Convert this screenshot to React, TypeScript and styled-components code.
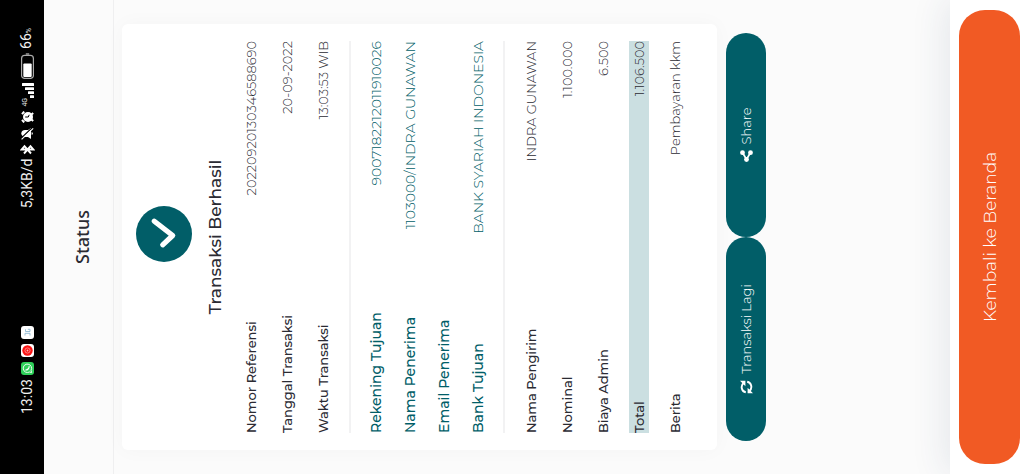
import React from "react";
import styled, { createGlobalStyle } from "styled-components";

const TEAL = "#015e68";
const INK = "#2b2b33";
const ORANGE = "#f15a24";

const GlobalStyle = createGlobalStyle`
  *, *::before, *::after { box-sizing: border-box; }
  body { margin: 0; background: #fbfbfb; font-family: Montserrat, Inter, sans-serif; }
  h1, h2, dl, dd { margin: 0; }
`;

const Viewport = styled.div`
  height: 100vh;
  overflow: hidden;
`;

/* The phone page is shown lying on its left side. */
const Phone = styled.div`
  display: flex;
  flex-direction: column;
  width: 100vh;
  height: 100vw;
  background: #fbfbfb;
  transform-origin: top left;
  transform: rotate(-90deg) translateX(-100%);
`;

const StatusBar = styled.div`
  display: flex;
  align-items: center;
  justify-content: space-between;
  height: 44px;
  padding: 10px 28px 0 60px;
  background: #000;
  color: #f0f0f0;
  font: 400 14px/20px Roboto, sans-serif;
`;

const StatusGroup = styled.div`
  display: flex;
  align-items: center;
  gap: 4px;
  svg { display: block; }
`;

const RunningApps = styled.div`
  display: flex;
  gap: 5px;
`;

const Percent = styled.small`
  font-size: 7px;
`;

const Header = styled.header`
  display: flex;
  align-items: center;
  justify-content: center;
  height: 70px;
  padding-top: 6px;
  border-bottom: 1px solid #efeff0;
`;

const HeaderTitle = styled.h1`
  color: ${INK};
  font: 500 18px/24px "Noto Sans", sans-serif;
`;

const Main = styled.main`
  flex: 1;
  padding: 8px 24px 0;
`;

const Card = styled.section`
  padding: 14px 17px 32px;
  border-radius: 6px;
  background: #fff;
  box-shadow: 0 0 20px rgba(0, 0, 0, 0.03);
`;

const CardHead = styled.div`
  display: flex;
  flex-direction: column;
  align-items: center;
  gap: 11px;
  padding-bottom: 14px;
`;

const CardTitle = styled.h2`
  color: ${INK};
  font-size: 17px;
  font-weight: 500;
  line-height: 24px;
`;

const Details = styled.dl<{ $accent?: boolean }>`
  display: flex;
  flex-direction: column;
  gap: ${(p) => (p.$accent ? 14 : 16)}px;
  padding: ${(p) => (p.$accent ? 15 : 16)}px 0;
  color: ${(p) => (p.$accent ? TEAL : INK)};
  font-size: ${(p) => (p.$accent ? 14 : 13)}px;
  line-height: 20px;
  &:first-of-type { padding-top: 0; }
  & + & { border-top: 2px solid #f2f2f3; }
  &:last-child { padding-bottom: 0; }
`;

const Row = styled.div<{ $highlight?: boolean }>`
  display: flex;
  justify-content: space-between;
  height: 20px;
  background: ${(p) => (p.$highlight ? "#cbdfe1" : "transparent")};
`;

const Label = styled.dt`
  font-weight: 500;
`;

const Value = styled.dd`
  font-weight: 300;
`;

const Actions = styled.div`
  display: flex;
  padding: 9px 9px 0;
`;

const ActionButton = styled.button`
  display: flex;
  flex: 1;
  align-items: center;
  justify-content: center;
  gap: 6px;
  height: 40px;
  padding: 0;
  border: 0;
  border-radius: 20px;
  background: ${TEAL};
  color: #fff;
  font: 300 13px/20px Montserrat, Inter, sans-serif;
`;

const Footer = styled.footer`
  padding: 9px 10px 8px;
  background: #fff;
  box-shadow: 0 -4px 36px rgba(40, 60, 100, 0.11);
`;

const HomeButton = styled.button`
  display: block;
  width: 100%;
  height: 61px;
  padding: 0;
  border: 0;
  border-radius: 26px;
  background: ${ORANGE};
  color: #fff;
  font: 300 17px/24px Montserrat, Inter, sans-serif;
`;

type Item = { label: string; value: string; highlight?: boolean };

const reference: Item[] = [
  { label: "Nomor Referensi", value: "20220920130346588690" },
  { label: "Tanggal Transaksi", value: "20-09-2022" },
  { label: "Waktu Transaksi", value: "13:03:53 WIB" },
];

const recipient: Item[] = [
  { label: "Rekening Tujuan", value: "9007182212011910026" },
  { label: "Nama Penerima", value: "1103000/INDRA GUNAWAN" },
  { label: "Email Penerima", value: "" },
  { label: "Bank Tujuan", value: "BANK SYARIAH INDONESIA" },
];

const payment: Item[] = [
  { label: "Nama Pengirim", value: "INDRA GUNAWAN" },
  { label: "Nominal", value: "1.100.000" },
  { label: "Biaya Admin", value: "6.500" },
  { label: "Total", value: "1.106.500", highlight: true },
  { label: "Berita", value: "Pembayaran kkm" },
];

function DetailList({ items, accent }: { items: Item[]; accent?: boolean }) {
  return (
    <Details $accent={accent}>
      {items.map((item) => (
        <Row key={item.label} $highlight={item.highlight}>
          <Label>{item.label}</Label>
          <Value>{item.value}</Value>
        </Row>
      ))}
    </Details>
  );
}

const WhatsAppIcon = () => (
  <svg width="13" height="13" viewBox="0 0 13 13" fill="none">
    <rect width="13" height="13" rx="3" fill="#2fd05a" />
    <path d="M2.4 10.6 3 8.4A4.2 4.2 0 1 1 4.7 10.1Z" stroke="#fff" strokeWidth="0.9" />
    <path d="M5 4.8C4.9 6.5 6.6 8.2 8.4 8.1" stroke="#fff" strokeWidth="1.2" strokeLinecap="round" />
  </svg>
);

const RecorderIcon = () => (
  <svg width="13" height="13" viewBox="0 0 13 13" fill="none">
    <rect width="13" height="13" rx="3" fill="#fff" />
    <circle cx="6.5" cy="6.5" r="5.2" fill="#fa1414" />
    <circle cx="6.5" cy="6.5" r="2.6" stroke="#ff9a9a" strokeWidth="0.8" />
    <circle cx="6.5" cy="6.5" r="0.9" fill="#ffb0b0" />
  </svg>
);

const AppIcon = () => (
  <svg width="13" height="13" viewBox="0 0 13 13" fill="none">
    <rect width="13" height="13" rx="3" fill="#fff" />
    <path d="M3.500 4h2.200v5H3.500M9.700 4.500H7.500v4.500h2.200V6.800" stroke="#8fb9d2" strokeWidth="0.9" />
  </svg>
);

const BluetoothIcon = () => (
  <svg width="11" height="15" viewBox="0 0 11 15" fill="none" stroke="#fff" strokeWidth="1.9">
    <path d="M1.5 4 8.8 10.5 5.5 13.3V1.7L8.8 4.5 1.5 11" />
  </svg>
);

const MutedIcon = () => (
  <svg width="13" height="14" viewBox="0 0 12 14">
    <path d="M6 1.2C3.6 1.6 2.6 3.2 2.6 5v3L.6 11h10.800l-2-3V5C9.400 3.200 8.400 1.600 6 1.200ZM4.700 11.600a1.300 1.300 0 0 0 2.600 0Z" fill="#fff" />
    <path d="M.8 .6 11.800 12.200" stroke="#000" strokeWidth="1.2" />
    <path d="M.2 1.600 11.200 13.200" stroke="#fff" strokeWidth="1.1" />
  </svg>
);

const AlarmIcon = () => (
  <svg width="12" height="13" viewBox="0 0 12 13" fill="none">
    <circle cx="6" cy="7" r="5" fill="#fff" />
    <path d="M.6 3.2 3.2 1M11.4 3.2 8.8 1M2 12.2l1.4-1.7M10 12.2l-1.4-1.7" stroke="#fff" strokeWidth="2" />
    <path d="M6 4.2V7.3L8.2 8.2" stroke="#000" strokeWidth="1" />
  </svg>
);

const SignalBox = styled.div`
  display: flex;
  align-items: flex-start;
`;

const NetworkLabel = styled.span`
  font-size: 7px;
  line-height: 8px;
`;

const SignalIcon = () => (
  <svg width="15" height="13" viewBox="0 0 15 13" fill="#fff">
    <rect x="0" y="9" width="2.8" height="4" rx=".5" />
    <rect x="4" y="7" width="2.8" height="6" rx=".5" />
    <rect x="8" y="4" width="2.8" height="9" rx=".5" />
    <rect x="12" y="1" width="3" height="12" rx=".5" />
  </svg>
);

const BatteryIcon = () => (
  <svg width="26" height="13" viewBox="0 0 26 13" fill="none">
    <rect x=".6" y=".6" width="23" height="11.8" rx="3" stroke="#aaa" strokeWidth="1.2" />
    <rect x="2" y="2.3" width="13.5" height="8.4" rx="1" fill="#fff" />
    <path d="M25 4.8v3.400" stroke="#999" strokeWidth="1.4" />
  </svg>
);

const SuccessIcon = () => (
  <svg width="62" height="56" viewBox="0 0 62 56" fill="none">
    <circle cx="34" cy="28" r="28" fill={TEAL} />
    <path d="M23.2 26.7 32.5 36.7 46.8 18.3" stroke="#fff" strokeWidth="5.2" strokeLinecap="round" strokeLinejoin="round" />
  </svg>
);

const RepeatIcon = () => (
  <svg width="14" height="13" viewBox="0 0 14 13" fill="none" stroke="#fff" strokeWidth="1.9">
    <path d="M1.7 5.8A5.2 4.8 0 0 1 11 3.6M12.3 7.2A5.2 4.8 0 0 1 3 9.4" />
    <path d="M13.2 0v5.400H7.800ZM.8 13V7.600H6.200Z" fill="#fff" stroke="none" />
  </svg>
);

const ShareIcon = () => (
  <svg width="12" height="13" viewBox="0 0 12 13" fill="#fff">
    <path d="M9.5 2.5 2.5 6.5l7 4" fill="none" stroke="#fff" strokeWidth="1.7" />
    <circle cx="9.3" cy="2.5" r="2.4" />
    <circle cx="2.5" cy="6.5" r="2.4" />
    <circle cx="9.3" cy="10.5" r="2.4" />
  </svg>
);

export default function App() {
  return (
    <Viewport>
      <GlobalStyle />
      <Phone>
        <StatusBar>
          <StatusGroup>
            <span>13:03</span>
            <RunningApps>
              <WhatsAppIcon />
              <RecorderIcon />
              <AppIcon />
            </RunningApps>
          </StatusGroup>
          <StatusGroup>
            <span>5,3KB/d</span>
            <BluetoothIcon />
            <MutedIcon />
            <AlarmIcon />
            <SignalBox>
              <NetworkLabel>4G</NetworkLabel>
              <SignalIcon />
            </SignalBox>
            <BatteryIcon />
            <span>
              66<Percent>%</Percent>
            </span>
          </StatusGroup>
        </StatusBar>
        <Header>
          <HeaderTitle>Status</HeaderTitle>
        </Header>
        <Main>
          <Card>
            <CardHead>
              <SuccessIcon />
              <CardTitle>Transaksi Berhasil</CardTitle>
            </CardHead>
            <DetailList items={reference} />
            <DetailList items={recipient} accent />
            <DetailList items={payment} />
          </Card>
          <Actions>
            <ActionButton type="button">
              <RepeatIcon />
              Transaksi Lagi
            </ActionButton>
            <ActionButton type="button">
              <ShareIcon />
              Share
            </ActionButton>
          </Actions>
        </Main>
        <Footer>
          <HomeButton type="button">Kembali ke Beranda</HomeButton>
        </Footer>
      </Phone>
    </Viewport>
  );
}
